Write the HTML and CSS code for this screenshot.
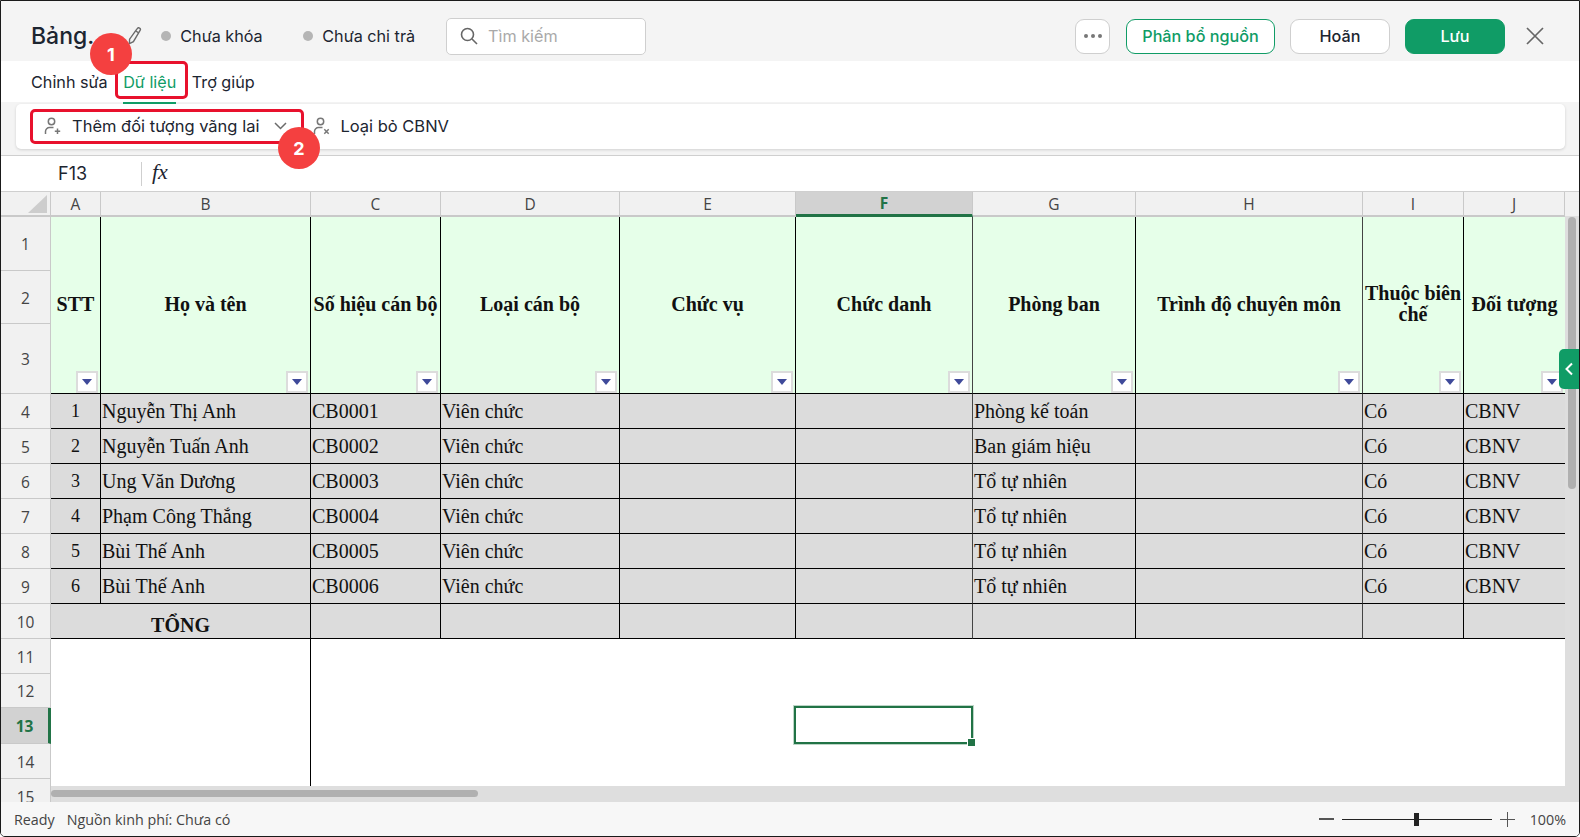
FILE: index.html
```html
<!DOCTYPE html>
<html lang="vi">
<head>
    <meta charset="UTF-8">
    <meta name="viewport" content="width=device-width, initial-scale=1.0">
    <title>Bảng</title>
    <link rel="stylesheet" href="styles.css">
</head>
<body>
    <div class="app">
        <header class="topbar">
            <h1 class="doc-title">Bảng.</h1>
            <svg class="pencil-icon" viewBox="0 0 16 18" width="16" height="18" fill="none" stroke="#6b6b6b" stroke-width="1.4">
                <path d="M11.2 1.6a1.7 1.7 0 0 1 2.9 1.8L7.4 14.6l-4 2 .2-4.4z"/>
                <path d="M9.8 4l2.9 1.8"/>
            </svg>
            <span class="status-tag first"><i class="dot"></i>Chưa khóa</span>
            <span class="status-tag second"><i class="dot"></i>Chưa chi trả</span>
            <div class="search-box">
                <svg viewBox="0 0 18 18" width="18" height="18" fill="none" stroke="#666" stroke-width="1.6">
                    <circle cx="7.5" cy="7.5" r="6"/>
                    <path d="M12 12l5 5"/>
                </svg>
                <span class="search-placeholder">Tìm kiếm</span>
            </div>
            <div class="topbar-actions">
                <button class="btn btn-more" type="button">
                    <svg viewBox="0 0 18 4" width="18" height="4" fill="#777">
                        <circle cx="2" cy="2" r="2"/><circle cx="9" cy="2" r="2"/><circle cx="16" cy="2" r="2"/>
                    </svg>
                </button>
                <button class="btn btn-outline" type="button">Phân bổ nguồn</button>
                <button class="btn btn-plain" type="button">Hoãn</button>
                <button class="btn btn-save" type="button">Lưu</button>
                <svg class="close-icon" viewBox="0 0 18 18" width="18" height="18" fill="none" stroke="#666" stroke-width="1.7">
                    <path d="M1 1l16 16M17 1L1 17"/>
                </svg>
            </div>
        </header>

        <nav class="tabs">
            <a class="tab">Chỉnh sửa</a>
            <a class="tab active">Dữ liệu</a>
            <a class="tab">Trợ giúp</a>
        </nav>

        <div class="ribbon">
            <div class="ribbon-card">
                <button class="tool tool-add" type="button">
                    <svg viewBox="0 0 18 18" width="18" height="18" fill="none" stroke="#777" stroke-width="1.5">
                        <circle cx="7.5" cy="4.5" r="3.2"/>
                        <path d="M1.5 17v-2.5a4 4 0 0 1 4-4h4"/>
                        <path d="M13.5 11.5v5.5M10.8 14.2h5.4"/>
                    </svg>
                    <span>Thêm đối tượng vãng lai</span>
                    <svg class="chevron" viewBox="0 0 13 8" width="13" height="8" fill="none" stroke="#6b6b6b" stroke-width="1.5">
                        <path d="M1 1l5.5 5.5L12 1"/>
                    </svg>
                </button>
                <button class="tool tool-remove" type="button">
                    <svg viewBox="0 0 18 18" width="18" height="18" fill="none" stroke="#777" stroke-width="1.5">
                        <circle cx="7.5" cy="4.5" r="3.2"/>
                        <path d="M1.5 17v-2.5a4 4 0 0 1 4-4h4"/>
                        <path d="M11.3 12.3l4.4 4.4M15.7 12.3l-4.4 4.4"/>
                    </svg>
                    <span>Loại bỏ CBNV</span>
                </button>
            </div>
        </div>

        <div class="formula-bar">
            <span class="cell-name">F13</span>
            <span class="fx">fx</span>
        </div>

        <section class="sheet">
            <div class="grid-wrap">
                <table class="grid">
                    <colgroup>
                        <col class="w-head"><col class="w-a"><col class="w-b"><col class="w-c"><col class="w-d">
                        <col class="w-e"><col class="w-f"><col class="w-g"><col class="w-h"><col class="w-i"><col class="w-j">
                    </colgroup>
                    <thead>
                        <tr class="col-row">
                            <th class="corner"><i class="corner-mark"></i></th>
                            <th>A</th><th>B</th><th>C</th><th>D</th><th>E</th>
                            <th class="selected">F</th>
                            <th>G</th><th>H</th><th>I</th><th>J</th>
                        </tr>
                    </thead>
                    <tbody>
                        <tr class="r1">
                            <th class="row-head">1</th>
                            <td class="title" rowspan="3">STT<i class="filter"></i></td>
                            <td class="title" rowspan="3">Họ và tên<i class="filter"></i></td>
                            <td class="title" rowspan="3">Số hiệu cán bộ<i class="filter"></i></td>
                            <td class="title" rowspan="3">Loại cán bộ<i class="filter"></i></td>
                            <td class="title" rowspan="3">Chức vụ<i class="filter"></i></td>
                            <td class="title soft" rowspan="3">Chức danh<i class="filter"></i></td>
                            <td class="title" rowspan="3">Phòng ban<i class="filter"></i></td>
                            <td class="title soft" rowspan="3">Trình độ chuyên môn<i class="filter"></i></td>
                            <td class="title" rowspan="3">Thuộc biên chế<i class="filter"></i></td>
                            <td class="title" rowspan="3">Đối tượng<i class="filter"></i></td>
                        </tr>
                        <tr class="r2"><th class="row-head">2</th></tr>
                        <tr class="r3"><th class="row-head">3</th></tr>
                        <tr class="data">
                            <th class="row-head">4</th>
                            <td class="num">1</td><td>Nguyễn Thị Anh</td><td>CB0001</td><td>Viên chức</td><td></td><td class="soft"></td><td>Phòng kế toán</td><td class="soft"></td><td>Có</td><td>CBNV</td>
                        </tr>
                        <tr class="data">
                            <th class="row-head">5</th>
                            <td class="num">2</td><td>Nguyễn Tuấn Anh</td><td>CB0002</td><td>Viên chức</td><td></td><td class="soft"></td><td>Ban giám hiệu</td><td class="soft"></td><td>Có</td><td>CBNV</td>
                        </tr>
                        <tr class="data">
                            <th class="row-head">6</th>
                            <td class="num">3</td><td>Ung Văn Dương</td><td>CB0003</td><td>Viên chức</td><td></td><td class="soft"></td><td>Tổ tự nhiên</td><td class="soft"></td><td>Có</td><td>CBNV</td>
                        </tr>
                        <tr class="data">
                            <th class="row-head">7</th>
                            <td class="num">4</td><td>Phạm Công Thắng</td><td>CB0004</td><td>Viên chức</td><td></td><td class="soft"></td><td>Tổ tự nhiên</td><td class="soft"></td><td>Có</td><td>CBNV</td>
                        </tr>
                        <tr class="data">
                            <th class="row-head">8</th>
                            <td class="num">5</td><td>Bùi Thế Anh</td><td>CB0005</td><td>Viên chức</td><td></td><td class="soft"></td><td>Tổ tự nhiên</td><td class="soft"></td><td>Có</td><td>CBNV</td>
                        </tr>
                        <tr class="data">
                            <th class="row-head">9</th>
                            <td class="num">6</td><td>Bùi Thế Anh</td><td>CB0006</td><td>Viên chức</td><td></td><td class="soft"></td><td>Tổ tự nhiên</td><td class="soft"></td><td>Có</td><td>CBNV</td>
                        </tr>
                        <tr class="data">
                            <th class="row-head">10</th>
                            <td class="total" colspan="2">TỔNG</td><td></td><td></td><td></td><td class="soft"></td><td></td><td class="soft"></td><td></td><td></td>
                        </tr>
                        <tr class="empty">
                            <th class="row-head">11</th>
                            <td class="frozen-edge" colspan="2"></td><td colspan="8"></td>
                        </tr>
                        <tr class="empty short">
                            <th class="row-head">12</th>
                            <td class="frozen-edge" colspan="2"></td><td colspan="8"></td>
                        </tr>
                        <tr class="empty tall">
                            <th class="row-head selected-row">13</th>
                            <td class="frozen-edge" colspan="2"></td><td colspan="8"></td>
                        </tr>
                        <tr class="empty">
                            <th class="row-head">14</th>
                            <td class="frozen-edge" colspan="2"></td><td colspan="8"></td>
                        </tr>
                        <tr class="empty">
                            <th class="row-head">15</th>
                            <td class="frozen-edge" colspan="2"></td><td colspan="8"></td>
                        </tr>
                    </tbody>
                </table>
                <div class="cell-cursor"><i class="cell-handle"></i></div>
            </div>
            <div class="vscroll"><div class="vscroll-thumb"></div></div>
            <div class="hscroll"><div class="hscroll-thumb"></div></div>
            <button class="side-toggle" type="button">
                <svg viewBox="0 0 10 14" width="10" height="14" fill="none" stroke="#fff" stroke-width="2">
                    <path d="M8 1.5L2.5 7 8 12.5"/>
                </svg>
            </button>
        </section>

        <footer class="statusbar">
            <span class="status-ready">Ready</span>
            <span>Nguồn kinh phí: Chưa có</span>
            <div class="zoom-control">
                <i class="zoom-minus"></i>
                <div class="zoom-track"><i class="zoom-thumb"></i></div>
                <i class="zoom-plus"></i>
                <span class="zoom-value">100%</span>
            </div>
        </footer>

        <!-- annotations drawn on top of the screenshot -->
        <div class="mark-box mark-tab"></div>
        <div class="mark-box mark-tool"></div>
        <div class="mark-badge badge-one">1</div>
        <div class="mark-badge badge-two">2</div>
    </div>
</body>
</html>
```

FILE: styles.css
```css
:root {
    --text-color: #1c2530;
    --green: #109c66;
    --sheet-green: #217346;
    --head-bg: #f1f1f1;
    --head-line: #c9c9c9;
    --panel-bg: #f4f4f4;
    --red: #e8112d;
}

* {
    margin: 0;
    padding: 0;
    box-sizing: border-box;
}

body {
    width: 1580px;
    height: 837px;
    overflow: hidden;
    font-family: 'Inter', sans-serif;
    color: var(--text-color);
    background: #fff;
}

.app {
    position: relative;
    display: flex;
    flex-direction: column;
    width: 1580px;
    height: 837px;
    border: 1px solid #1a1a1a;
    border-radius: 0 0 5px 5px;
    overflow: hidden;
}

/* top bar */
.topbar {
    display: flex;
    align-items: center;
    flex: 0 0 60px;
    padding: 10px 0 0 30px;
    background: var(--panel-bg);
}

.doc-title {
    font-size: 23px;
    font-weight: 500;
}

.pencil-icon {
    margin-left: 32px;
    margin-top: -1px;
}

.status-tag {
    display: flex;
    align-items: center;
    font-size: 16.2px;
}

.status-tag.first {
    margin-left: 19px;
    width: 142px;
}

.dot {
    width: 10px;
    height: 10px;
    margin-right: 9px;
    border-radius: 50%;
    background: #b5b5b5;
}

.search-box {
    display: flex;
    align-items: center;
    gap: 10px;
    width: 200px;
    height: 37px;
    margin-left: 31px;
    padding-left: 13px;
    background: #fff;
    border: 1px solid #cfcfcf;
    border-radius: 5px;
}

.search-placeholder {
    font-size: 16.2px;
    color: #a9a9a9;
}

.topbar-actions {
    display: flex;
    align-items: center;
    margin-left: auto;
    padding-right: 35px;
}

.btn {
    height: 35px;
    font-family: inherit;
    font-size: 16.2px;
    font-weight: 500;
    background: #fff;
    border: 1px solid #cfcfcf;
    border-radius: 9px;
}

.btn-more {
    display: flex;
    align-items: center;
    justify-content: center;
    width: 35px;
    margin-right: 16px;
}

.btn-outline {
    width: 149px;
    margin-right: 15px;
    color: var(--green);
    border-color: var(--green);
}

.btn-plain {
    width: 100px;
    margin-right: 15px;
    color: var(--text-color);
}

.btn-save {
    width: 100px;
    color: #fff;
    background: var(--green);
    border-color: var(--green);
}

.close-icon {
    margin-left: 21px;
}

/* tabs + ribbon */
.tabs {
    display: flex;
    align-items: center;
    flex: 0 0 41px;
    padding-left: 30px;
    background: #fff;
}

.tab {
    position: relative;
    font-size: 16.2px;
    margin-right: 15.5px;
}

.tab.active {
    color: var(--green);
}

.tab.active::after {
    content: '';
    position: absolute;
    left: 0;
    right: 0;
    bottom: -12px;
    height: 2px;
    background: var(--green);
}

.ribbon {
    flex: 0 0 53px;
    padding: 2px 14px 0 15px;
    background: var(--panel-bg);
}

.ribbon-card {
    display: flex;
    align-items: center;
    height: 45px;
    padding-left: 28px;
    background: #fff;
    border-radius: 5px;
    box-shadow: 0 1px 3px rgba(0, 0, 0, 0.15);
}

.tool {
    display: flex;
    align-items: center;
    padding-bottom: 2px;
    font-family: inherit;
    font-size: 16.5px;
    font-weight: 400;
    color: var(--text-color);
    background: none;
    border: none;
}

.tool-add span {
    margin-left: 10px;
}

.chevron {
    margin-left: 15px;
}

.tool-remove {
    margin-left: 26px;
}

.tool-remove span {
    margin-left: 9px;
}

/* formula bar */
.formula-bar {
    display: flex;
    align-items: center;
    flex: 0 0 37px;
    background: #fff;
    border-top: 1px solid #cfcfcf;
    border-bottom: 1px solid #cfcfcf;
}

.cell-name {
    width: 141px;
    padding-left: 57px;
    font-size: 18px;
    border-right: 1px solid #cfcfcf;
    line-height: 24px;
}

.fx {
    margin-left: 10px;
    margin-top: -4px;
    font-family: 'Liberation Serif', serif;
    font-style: italic;
    font-size: 22px;
    line-height: 24px;
}

/* sheet */
.sheet {
    position: relative;
    display: flex;
    flex: 1;
    min-height: 0;
    overflow: hidden;
}

.grid-wrap {
    position: relative;
    width: 1564px;
    overflow: hidden;
}

.grid {
    width: 1564px;
    table-layout: fixed;
    border-collapse: separate;
    border-spacing: 0;
    font-family: 'Liberation Serif', serif;
    font-size: 20px;
    color: #111;
}

.w-head { width: 50px; }
.w-a { width: 50px; }
.w-b { width: 210px; }
.w-c { width: 130px; }
.w-d { width: 179px; }
.w-e { width: 176px; }
.w-f { width: 177px; }
.w-g { width: 163px; }
.w-h { width: 227px; }
.w-i { width: 101px; }
.w-j { width: 101px; }

.col-row { height: 24px; }
.r1 { height: 54px; }
.r2 { height: 53px; }
.r3 { height: 70px; }
.data, .empty { height: 35px; }
tr.tall { height: 36px; }
tr.short { height: 34px; }

.col-row th {
    font-family: 'Open Sans', sans-serif;
    font-size: 15.5px;
    font-weight: 400;
    color: #444;
    background: var(--head-bg);
    border-right: 1px solid var(--head-line);
    border-bottom: 2px solid var(--head-line);
}

.col-row th.selected {
    font-weight: 700;
    color: var(--sheet-green);
    background: #d2d2d2;
    border-bottom: 3px solid var(--sheet-green);
}

.corner {
    position: relative;
}

.corner-mark {
    position: absolute;
    right: 3px;
    bottom: 2px;
    width: 0;
    height: 0;
    border-left: 19px solid transparent;
    border-bottom: 18px solid #cdcdcd;
}

.row-head {
    padding-top: 1px;
    font-family: 'Open Sans', sans-serif;
    font-size: 15.5px;
    font-weight: 400;
    line-height: 20px;
    color: #444;
    background: var(--head-bg);
    border-right: 1px solid var(--head-line);
    border-bottom: 1px solid var(--head-line);
}

.row-head.selected-row {
    font-weight: 700;
    color: var(--sheet-green);
    background: #d2d2d2;
    border-right: 3px solid var(--sheet-green);
}

td {
    padding: 0 0 0 1px;
    line-height: 22px;
    white-space: nowrap;
    overflow: hidden;
    border-right: 1px solid #000;
}

td:last-child {
    border-right: none;
}

td.soft {
    border-right-color: #444;
}

.title {
    position: relative;
    padding: 0 0 2px;
    font-weight: 700;
    line-height: 21px;
    text-align: center;
    white-space: normal;
    background: #e6ffe9;
    border-bottom: 1px solid #000;
}

.filter {
    position: absolute;
    right: 2px;
    bottom: 0;
    width: 22px;
    height: 22px;
    background: #fff;
    border: 2px solid #dcdcdc;
}

.filter::after {
    content: '';
    position: absolute;
    left: 4px;
    top: 6px;
    border-left: 5px solid transparent;
    border-right: 5px solid transparent;
    border-top: 6px solid #3f4a9a;
}

.data td {
    background: #dcdcdc;
    border-bottom: 1px solid #000;
}

.data td.num {
    padding: 0;
    text-align: center;
    font-size: 18px;
}

.data td.total {
    padding: 8px 0 0;
    text-align: center;
    font-weight: 700;
    border-right-color: #000;
}

.empty td {
    border-right: none;
}

.empty td.frozen-edge {
    border-right: 1px solid #000;
}

.cell-cursor {
    position: absolute;
    left: 793px;
    top: 514px;
    width: 179px;
    height: 38px;
    border: 2px solid var(--sheet-green);
    outline: 1px solid #bcd5c6;
}

.cell-handle {
    position: absolute;
    right: -4px;
    bottom: -4px;
    width: 7px;
    height: 7px;
    background: var(--sheet-green);
    outline: 1px solid #fff;
}

.vscroll {
    flex: 1;
    padding: 25px 3px 0;
    background: linear-gradient(var(--head-bg) 24px, #dedede 24px);
}

.vscroll-thumb {
    height: 272px;
    background: #b0b0b0;
    border-radius: 4px;
}

.hscroll {
    position: absolute;
    left: 50px;
    right: 0;
    bottom: 0;
    height: 16px;
    padding-top: 4px;
    background: #dedede;
}

.hscroll-thumb {
    width: 427px;
    height: 7px;
    background: #b0b0b0;
    border-radius: 4px;
}

.side-toggle {
    position: absolute;
    right: 0;
    top: 157px;
    display: flex;
    align-items: center;
    justify-content: center;
    width: 20px;
    height: 40px;
    background: var(--green);
    border: none;
    border-radius: 5px 0 0 5px;
}

/* status bar */
.statusbar {
    display: flex;
    align-items: center;
    flex: 0 0 34px;
    padding-left: 13px;
    font-family: 'Open Sans', sans-serif;
    font-size: 14.3px;
    color: #444;
    background: #f7f7f7;
}

.status-ready {
    margin-right: 12px;
}

.zoom-control {
    display: flex;
    align-items: center;
    margin-left: auto;
    padding-right: 13px;
}

.zoom-minus {
    width: 15px;
    height: 2px;
    background: #555;
}

.zoom-track {
    position: relative;
    width: 150px;
    height: 1px;
    margin: 0 8px;
    background: #222;
}

.zoom-thumb {
    position: absolute;
    left: 72px;
    top: -6px;
    width: 5px;
    height: 13px;
    background: #222;
}

.zoom-plus {
    position: relative;
    width: 15px;
    height: 15px;
    background: linear-gradient(#555, #555) center / 15px 1px no-repeat,
                linear-gradient(#555, #555) center / 1px 15px no-repeat;
}

.zoom-value {
    margin-left: 15px;
}

/* red annotation boxes and numbered badges */
.mark-box {
    position: absolute;
    border: 3.5px solid var(--red);
    border-radius: 5px;
}

.mark-tab {
    left: 114px;
    top: 60px;
    width: 73px;
    height: 38px;
}

.mark-tool {
    left: 29px;
    top: 108px;
    width: 274px;
    height: 35px;
}

.mark-badge {
    position: absolute;
    display: flex;
    align-items: center;
    justify-content: center;
    width: 42px;
    height: 42px;
    font-size: 18px;
    font-weight: 700;
    color: #fff;
    background: #f44040;
    border-radius: 50%;
}

.badge-one {
    left: 89px;
    top: 32px;
}

.badge-two {
    left: 277px;
    top: 126px;
}
```
